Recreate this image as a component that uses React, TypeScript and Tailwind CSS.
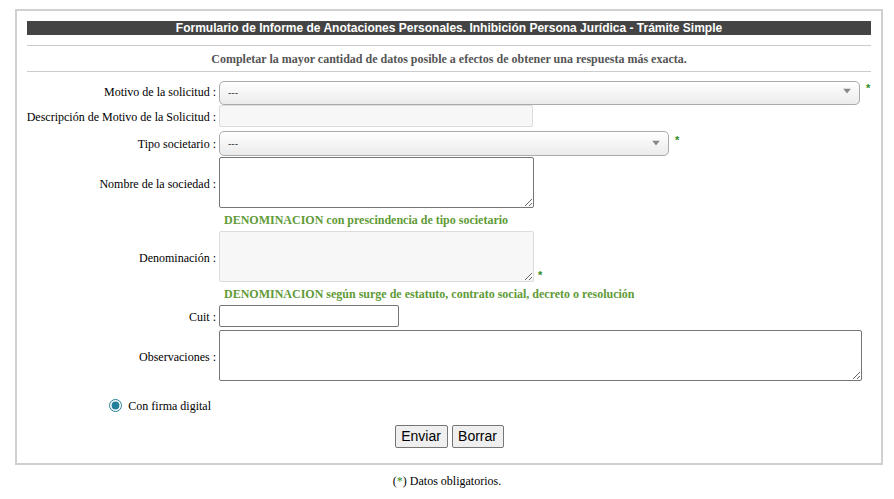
import React from "react";

const serif = "font-['Liberation_Serif','Times_New_Roman',serif]";
const sans = "font-['Liberation_Sans',Arial,sans-serif]";

function Req({ className = "" }: { className?: string }) {
  return (
    <span className={`text-[11px] font-bold leading-none text-[#2e8b22] ${sans} ${className}`}>*</span>
  );
}

function Label({ children }: { children: React.ReactNode }) {
  return (
    <div className="flex w-[190px] shrink-0 items-center justify-end whitespace-nowrap pr-[1px] pt-[2px] text-[12px] text-black">
      {children}
    </div>
  );
}

function FakeSelect({ width }: { width: string }) {
  return (
    <div className={`relative h-full ${width}`}>
      <select
        className={`h-full w-full appearance-none rounded-[5px] border border-[#aaa] bg-linear-to-b from-white to-[#ebebeb] pl-[8px] text-[10px] text-[#444] outline-none ${sans}`}
        defaultValue="-"
      >
        <option value="-">---</option>
      </select>
      <svg
        viewBox="0 0 8 5"
        className="pointer-events-none absolute right-[9px] top-1/2 h-[5px] w-[8px] -translate-y-1/2"
      >
        <path d="M0 0h8L4 5z" fill="#888" />
      </svg>
    </div>
  );
}

function Hint({ children }: { children: React.ReactNode }) {
  return (
    <div className="flex h-[23px] items-center">
      <div className="w-[190px] shrink-0" />
      <div className="pl-[7px] text-[12px] font-bold text-[#5f9b37]">{children}</div>
    </div>
  );
}

export default function App() {
  return (
    <div className={`min-h-[499px] bg-white pt-[9px] ${serif}`}>
      <div className="ml-[15px] box-border h-[456px] w-[868px] border-2 border-[#d0d0d0] px-[10px] pt-[10px]">
        {/* Título */}
        <div
          className={`flex h-[14px] items-center justify-center bg-[#444] text-[12px] font-bold leading-[14px] text-white ${sans}`}
        >
          Formulario de Informe de Anotaciones Personales. Inhibición Persona Jurídica - Trámite Simple
        </div>

        <div className="mt-[10px] border-t border-[#ccc]" />
        <div className="flex h-[25px] items-center justify-center text-[12px] font-bold text-[#555]">
          Completar la mayor cantidad de datos posible a efectos de obtener una respuesta más exacta.
        </div>
        <div className="border-t border-[#ccc]" />

        {/* Motivo */}
        <div className="mt-[7px] flex h-[24px] gap-[2px]">
          <Label>Motivo de la solicitud :</Label>
          <FakeSelect width="w-[641px]" />
          <Req className="ml-[4px] mt-[4px]" />
        </div>

        {/* Descripción */}
        <div className="mt-[2px] flex h-[22px] gap-[2px]">
          <Label>Descripción de Motivo de la Solicitud :</Label>
          <input
            disabled
            className="h-full w-[314px] rounded-[2px] border border-[#dcdcdc] bg-[#f7f7f7]"
          />
        </div>

        {/* Tipo */}
        <div className="mt-[3px] flex h-[25px] gap-[2px]">
          <Label>Tipo societario :</Label>
          <FakeSelect width="w-[450px]" />
          <Req className="ml-[4px] mt-[5px]" />
        </div>

        {/* Nombre */}
        <div className="mt-[2px] flex h-[51px] gap-[2px]">
          <Label>Nombre de la sociedad :</Label>
          <textarea className="h-full w-[315px] rounded-[2px] border border-[#767676] bg-white" />
        </div>

        <Hint>DENOMINACION con prescindencia de tipo societario</Hint>

        {/* Denominación */}
        <div className="flex h-[51px] gap-[2px]">
          <Label>Denominación :</Label>
          <textarea
            disabled
            className="h-full w-[315px] rounded-[2px] border border-[#dcdcdc] bg-[#f7f7f7]"
          />
          <Req className="ml-[2px] self-end mb-[1px]" />
        </div>

        <Hint>DENOMINACION según surge de estatuto, contrato social, decreto o resolución</Hint>

        {/* Cuit */}
        <div className="flex h-[22px] gap-[2px]">
          <Label>Cuit :</Label>
          <input className="h-full w-[180px] rounded-[2px] border border-[#767676] bg-white" />
        </div>

        {/* Observaciones */}
        <div className="mt-[3px] flex h-[51px] gap-[2px]">
          <Label>Observaciones :</Label>
          <textarea className="h-full w-[643px] rounded-[2px] border border-[#767676] bg-white" />
        </div>

        {/* Firma */}
        <div className="mt-[16px] flex h-[16px] w-[190px] items-center justify-end pr-[6px]">
          <input
            type="radio"
            defaultChecked
            className="m-0 mr-[6px] h-[13px] w-[13px] accent-[#23809a]"
          />
          <span className="pt-[2px] text-[12px] text-black">Con firma digital</span>
        </div>

        {/* Botones */}
        <div className={`mt-[12px] flex justify-center gap-[4px] ${sans}`}>
          <button className="h-[23px] w-[53px] rounded-[2px] border border-[#767676] bg-[#efefef] text-[14px] text-black">
            Enviar
          </button>
          <button className="h-[23px] w-[52px] rounded-[2px] border border-[#767676] bg-[#efefef] text-[14px] text-black">
            Borrar
          </button>
        </div>
      </div>

      <div className="mt-[9px] text-center text-[12px] leading-[14px] text-black">
        (<span className="text-[#2e8b22]">*</span>) Datos obligatorios.
      </div>
    </div>
  );
}
